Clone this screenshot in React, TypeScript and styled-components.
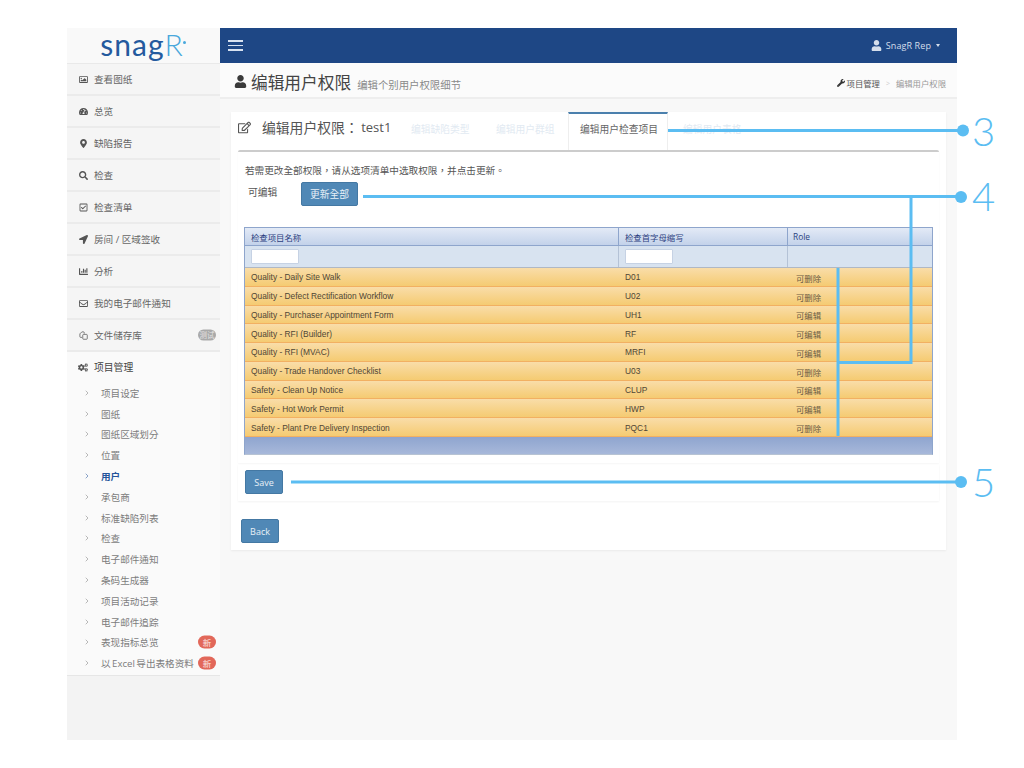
import React from 'react';
import styled, { createGlobalStyle } from 'styled-components';
import { ChevronRight } from 'lucide-react';
import {
  FaChartBar,
  FaCogs,
  FaLocationArrow,
  FaMapMarkerAlt,
  FaRegCheckSquare,
  FaRegEdit,
  FaRegEnvelope,
  FaRegImage,
  FaSearch,
  FaTachometerAlt,
  FaUser,
  FaWrench,
} from 'react-icons/fa';

const CJK = '"Open Sans", "Noto Sans CJK TC", sans-serif';

const GlobalStyle = createGlobalStyle`
  html, body {
    margin: 0;
    padding: 0;
    background: #fff;
    font-family: ${CJK};
  }
  * { box-sizing: border-box; }
`;

const Canvas = styled.div`
  position: relative;
  width: 1024px;
  height: 768px;
  padding: 28px 67px;
  overflow: hidden;
`;

const Frame = styled.div`
  display: flex;
  width: 890px;
  height: 712px;
`;

/* ---------- sidebar ---------- */

const Sidebar = styled.aside`
  display: flex;
  flex-direction: column;
  width: 153px;
  flex: none;
  background: #f3f3f3;
`;

const LogoBar = styled.div`
  display: flex;
  align-items: center;
  justify-content: center;
  height: 36px;
  padding: 0 3px 3px 0;
  background: #f9f9f9;
  border-bottom: 1px solid #e9e9e9;
`;

const LogoText = styled.span`
  display: flex;
  align-items: baseline;
  font-family: Lato, sans-serif;
  font-size: 30px;
  line-height: 32px;
  letter-spacing: 1px;
  color: #245a9e;
`;

const LogoR = styled.span`
  position: relative;
  font-weight: 300;
  color: #4aa8dc;
  &::after {
    content: '';
    position: absolute;
    right: -2px;
    top: 13px;
    width: 3px;
    height: 3px;
    border-radius: 50%;
    background: #4aa8dc;
  }
`;

const NavItem = styled.div`
  position: relative;
  display: flex;
  align-items: center;
  height: 32px;
  padding-left: 11px;
  font-size: 9.6px;
  color: #666;
  background: #f5f5f5;
  border-bottom: 2px solid #ebebeb;
`;

const NavIcon = styled.span`
  display: flex;
  justify-content: center;
  width: 10px;
  margin-right: 6px;
  font-size: 9px;
  color: #555;
`;

const GroupIcon = styled(NavIcon)`
  font-size: 11px;
`;

const Pill = styled.span<{ $tone: 'gray' | 'red' }>`
  position: absolute;
  right: 4px;
  top: 50%;
  transform: translateY(-50%);
  width: 18px;
  height: ${(p) => (p.$tone === 'red' ? 13 : 11)}px;
  border-radius: 7px;
  font-size: ${(p) => (p.$tone === 'red' ? 8.5 : 7.5)}px;
  line-height: ${(p) => (p.$tone === 'red' ? 13 : 11)}px;
  text-align: center;
  color: ${(p) => (p.$tone === 'red' ? '#fbe6e2' : '#e4e4e4')};
  background: ${(p) => (p.$tone === 'red' ? '#e2685a' : '#a9a9a9')};
`;

const NavGroup = styled.div`
  background: #fafafa;
  border-bottom: 1px solid #e6e6e6;
  padding-bottom: 1px;
`;

const GroupTitle = styled.div`
  display: flex;
  align-items: center;
  height: 30px;
  padding-left: 11px;
  font-size: 9.8px;
  color: #444;
`;

const SubList = styled.div`
  display: flex;
  flex-direction: column;
  padding-top: 0.5px;
`;

const SubItem = styled.div<{ $active?: boolean }>`
  position: relative;
  display: flex;
  align-items: center;
  height: 20.8px;
  padding-left: 16px;
  font-size: 9.6px;
  word-spacing: -1px;
  font-weight: ${(p) => (p.$active ? 700 : 400)};
  color: ${(p) => (p.$active ? '#24549a' : '#7d7d7d')};
  svg {
    width: 8px;
    height: 8px;
    margin-right: 10px;
    flex: none;
  }
`;

/* ---------- main ---------- */

const Main = styled.main`
  flex: 1;
  display: flex;
  flex-direction: column;
  background: #f8f8f8;
  min-width: 0;
`;

const TopBar = styled.header`
  display: flex;
  align-items: center;
  justify-content: space-between;
  height: 35px;
  padding: 0 17px 0 8px;
  background: #1e4785;
`;

const Burger = styled.div`
  display: flex;
  flex-direction: column;
  gap: 3px;
  width: 15px;
  span {
    display: block;
    height: 1.5px;
    background: #d8e2f0;
  }
`;

const UserMenu = styled.div`
  display: flex;
  align-items: center;
  font-size: 9px;
  letter-spacing: 0.1px;
  color: #d5deeb;
  svg {
    width: 11px;
    height: 11px;
    margin-right: 4px;
  }
`;

const Caret = styled.span`
  width: 0;
  height: 0;
  margin-left: 5px;
  border-left: 2.5px solid transparent;
  border-right: 2.5px solid transparent;
  border-top: 3px solid #d5deeb;
`;

const PageHead = styled.div`
  display: flex;
  align-items: center;
  justify-content: space-between;
  height: 36px;
  padding: 3px 11px 0 14px;
  background: #fbfbfb;
  border-bottom: 2px solid #eeeeee;
`;

const PageTitle = styled.div`
  display: flex;
  align-items: baseline;
  font-size: 16.7px;
  color: #444;
  svg {
    align-self: center;
    width: 13px;
    height: 13px;
    margin-right: 4px;
    color: #3a3a3a;
  }
  small {
    margin-left: 6px;
    font-size: 10.4px;
    color: #8a8a8a;
  }
`;

const Crumbs = styled.div`
  display: flex;
  align-items: center;
  margin-top: 3px;
  font-size: 8.35px;
  color: #999;
  svg {
    width: 8px;
    height: 8px;
    margin-right: 2px;
    color: #333;
  }
  b {
    font-weight: 400;
    color: #555;
  }
  i {
    margin: 0 6px;
    font-style: normal;
    font-size: 7px;
    color: #ccc;
  }
`;

const Portlet = styled.section`
  margin: 13px 11px 0;
  height: 438px;
  background: #fff;
  box-shadow: 0 1px 2px rgba(0, 0, 0, 0.06);
`;

const PortletHead = styled.div`
  display: flex;
  align-items: stretch;
  height: 38px;
`;

const PortletTitle = styled.div`
  display: flex;
  align-items: center;
  width: 169px;
  padding: 0 0 8px 7px;
  font-size: 13.8px;
  white-space: pre;
  color: #555;
  svg {
    width: 13px;
    height: 13px;
    margin-right: 11px;
    color: #555;
  }
`;

const TitleName = styled.span`
  font-size: 13px;
  margin-left: -1px;
`;

const Tab = styled.div<{ $w: number; $pad: number; $active?: boolean }>`
  display: flex;
  align-items: center;
  width: ${(p) => p.$w}px;
  padding: 0 0 7px ${(p) => p.$pad}px;
  font-size: 9.75px;
  color: ${(p) => (p.$active ? '#666' : '#e2eaf2')};
  background: #fff;
  border-top: 2px solid ${(p) => (p.$active ? '#4b80ad' : 'transparent')};
  border-left: 1px solid ${(p) => (p.$active ? '#eee' : 'transparent')};
  border-right: 1px solid ${(p) => (p.$active ? '#eee' : 'transparent')};
`;

const PortletBody = styled.div`
  margin: 0 7px;
`;

const TableCard = styled.div`
  height: 313px;
  padding: 12px 6px 0;
  border-top: 2px solid #ccc;
  border-radius: 2px 2px 0 0;
  box-shadow: 0 1px 2px rgba(0, 0, 0, 0.04);
`;

const Hint = styled.div`
  font-size: 9.65px;
  line-height: 14px;
  color: #555;
  padding-left: 1px;
`;

const BulkRow = styled.div`
  display: flex;
  align-items: flex-start;
  margin-top: 4px;
  height: 45px;
`;

const BulkLabel = styled.span`
  width: 57px;
  padding: 4px 0 0 4px;
  font-size: 9.8px;
  line-height: 14px;
  color: #555;
`;

const Button = styled.button`
  display: block;
  height: 24px;
  padding: 0;
  font-family: ${CJK};
  font-size: 9.75px;
  color: #e8f0f7;
  background: #5088b6;
  border: 1px solid #4478a3;
  border-radius: 2px;
`;

const BulkButton = styled(Button)`
  width: 57px;
`;

const SaveButton = styled(Button)`
  width: 38px;
  font-size: 9px;
`;

const BackButton = styled(Button)`
  width: 38px;
  margin: 18px 0 0 10px;
  font-size: 9px;
`;

const Grid = styled.div`
  width: 689px;
  border: 1px solid #8ea5cc;
  border-bottom: 1px solid #b7c3d3;
`;

const Row = styled.div<{ $h: number }>`
  display: grid;
  grid-template-columns: 374px 169px 1fr;
  height: ${(p) => p.$h}px;
`;

const HeadRow = styled(Row)`
  background: linear-gradient(#e3eaf6, #c3d2ea);
  border-bottom: 1px solid #8ea5cc;
`;

const FilterRow = styled(Row)`
  background: #d8e3f0;
  border-bottom: 1px solid #b0b8c4;
`;

const DataRow = styled(Row)`
  background: linear-gradient(#f9dda9, #f5cb72);
  border-bottom: 1px solid #f2b062;
`;

const HeadCell = styled.div`
  display: flex;
  align-items: center;
  padding-left: 6px;
  font-size: 8.4px;
  color: #2c3f80;
  border-right: 1px solid #8ea5cc;
  &:last-child {
    border-right: 0;
    padding-left: 5px;
  }
`;

const FilterCell = styled.div`
  display: flex;
  align-items: center;
  padding-left: 6px;
  border-right: 1px solid #b4c2d6;
  &:last-child {
    border-right: 0;
  }
`;

const FilterBox = styled.div`
  width: 48px;
  height: 15px;
  background: #fff;
  border: 1px solid #c6d2e4;
  border-radius: 1px;
`;

const Cell = styled.div`
  display: flex;
  align-items: center;
  padding: 1px 0 0 6px;
  font-family: 'Liberation Sans', sans-serif;
  font-size: 8.4px;
  color: #4f4636;
`;

const RoleCell = styled.div`
  display: flex;
  align-items: center;
  padding: 2px 0 0 8px;
  font-size: 8.4px;
  color: #6b5c45;
`;

const GridFoot = styled.div`
  height: 17px;
  background: linear-gradient(#8fa5cf, #a7b8da);
`;

const SaveBar = styled.div`
  height: 37px;
  margin-top: 1px;
  padding: 6px 7px 0;
  box-shadow: 0 1px 2px rgba(0, 0, 0, 0.05);
`;

/* ---------- callouts over the screenshot ---------- */

const Callouts = styled.svg`
  position: absolute;
  left: 0;
  top: 0;
  width: 1024px;
  height: 768px;
  pointer-events: none;
`;

const CalloutNumber = styled.span<{ $top: number }>`
  position: absolute;
  left: 972px;
  top: ${(p) => p.$top}px;
  font-family: Lato, sans-serif;
  font-weight: 300;
  font-size: 40px;
  line-height: 40px;
  color: #5bbdf2;
`;

const DocsIcon = () => (
  <svg viewBox="0 0 12 12" width="1em" height="1em" fill="none" stroke="currentColor" strokeWidth="1">
    <path d="M4 8.5H2.2a1 1 0 0 1-1-1V3.8L3.8 1.2H6a1 1 0 0 1 1 1V3.5" />
    <rect x="5" y="4.5" width="6" height="6.5" rx="1" />
  </svg>
);

const navItems = [
  { icon: <FaRegImage />, label: '查看图纸' },
  { icon: <FaTachometerAlt />, label: '总览' },
  { icon: <FaMapMarkerAlt />, label: '缺陷报告' },
  { icon: <FaSearch />, label: '检查' },
  { icon: <FaRegCheckSquare />, label: '检查清单' },
  { icon: <FaLocationArrow />, label: '房间 / 区域签收' },
  { icon: <FaChartBar />, label: '分析' },
  { icon: <FaRegEnvelope />, label: '我的电子邮件通知' },
  { icon: <DocsIcon />, label: '文件储存库', beta: true },
];

const subItems = [
  { label: '项目设定' },
  { label: '图纸' },
  { label: '图纸区域划分' },
  { label: '位置' },
  { label: '用户', active: true },
  { label: '承包商' },
  { label: '标准缺陷列表' },
  { label: '检查' },
  { label: '电子邮件通知' },
  { label: '条码生成器' },
  { label: '项目活动记录' },
  { label: '电子邮件追踪' },
  { label: '表现指标总览', isNew: true },
  { label: '以 Excel 导出表格资料', isNew: true },
];

const rows = [
  ['Quality - Daily Site Walk', 'D01', '可删除'],
  ['Quality - Defect Rectification Workflow', 'U02', '可删除'],
  ['Quality - Purchaser Appointment Form', 'UH1', '可编辑'],
  ['Quality - RFI (Builder)', 'RF', '可编辑'],
  ['Quality - RFI (MVAC)', 'MRFI', '可编辑'],
  ['Quality - Trade Handover Checklist', 'U03', '可删除'],
  ['Safety - Clean Up Notice', 'CLUP', '可编辑'],
  ['Safety - Hot Work Permit', 'HWP', '可编辑'],
  ['Safety - Plant Pre Delivery Inspection', 'PQC1', '可删除'],
];

export default function App() {
  return (
    <Canvas>
      <GlobalStyle />
      <Frame>
        <Sidebar>
          <LogoBar>
            <LogoText>
              snag<LogoR>R</LogoR>
            </LogoText>
          </LogoBar>
          {navItems.map((item) => (
            <NavItem key={item.label}>
              <NavIcon>{item.icon}</NavIcon>
              {item.label}
              {item.beta && <Pill $tone="gray">测试</Pill>}
            </NavItem>
          ))}
          <NavGroup>
            <GroupTitle>
              <GroupIcon>
                <FaCogs />
              </GroupIcon>
              项目管理
            </GroupTitle>
            <SubList>
              {subItems.map((item) => (
                <SubItem key={item.label} $active={item.active}>
                  <ChevronRight strokeWidth={1.6} />
                  {item.label}
                  {item.isNew && <Pill $tone="red">新</Pill>}
                </SubItem>
              ))}
            </SubList>
          </NavGroup>
        </Sidebar>

        <Main>
          <TopBar>
            <Burger>
              <span />
              <span />
              <span />
            </Burger>
            <UserMenu>
              <FaUser />
              SnagR Rep
              <Caret />
            </UserMenu>
          </TopBar>

          <PageHead>
            <PageTitle>
              <FaUser />
              编辑用户权限
              <small>编辑个别用户权限细节</small>
            </PageTitle>
            <Crumbs>
              <FaWrench />
              <b>项目管理</b>
              <i>&gt;</i>
              编辑用户权限
            </Crumbs>
          </PageHead>

          <Portlet>
            <PortletHead>
              <PortletTitle>
                <FaRegEdit />
                编辑用户权限： <TitleName>test1</TitleName>
              </PortletTitle>
              <Tab $w={84} $pad={10}>编辑缺陷类型</Tab>
              <Tab $w={84} $pad={11}>编辑用户群组</Tab>
              <Tab $w={100} $pad={11} $active>编辑用户检查项目</Tab>
              <Tab $w={84} $pad={14}>编辑用户表格</Tab>
            </PortletHead>

            <PortletBody>
              <TableCard>
                <Hint>若需更改全部权限，请从选项清单中选取权限，并点击更新。</Hint>
                <BulkRow>
                  <BulkLabel>可编辑</BulkLabel>
                  <BulkButton>更新全部</BulkButton>
                </BulkRow>
                <Grid>
                  <HeadRow $h={18}>
                    <HeadCell>检查项目名称</HeadCell>
                    <HeadCell>检查首字母缩写</HeadCell>
                    <HeadCell>Role</HeadCell>
                  </HeadRow>
                  <FilterRow $h={22}>
                    <FilterCell>
                      <FilterBox />
                    </FilterCell>
                    <FilterCell>
                      <FilterBox />
                    </FilterCell>
                    <FilterCell />
                  </FilterRow>
                  {rows.map(([name, code, role]) => (
                    <DataRow key={code} $h={18.78}>
                      <Cell>{name}</Cell>
                      <Cell>{code}</Cell>
                      <RoleCell>{role}</RoleCell>
                    </DataRow>
                  ))}
                  <GridFoot />
                </Grid>
              </TableCard>
              <SaveBar>
                <SaveButton>Save</SaveButton>
              </SaveBar>
            </PortletBody>
            <BackButton>Back</BackButton>
          </Portlet>
        </Main>
      </Frame>

      <Callouts viewBox="0 0 1024 768">
        <g stroke="#5bbdf2" strokeWidth="3" fill="none">
          <path d="M668 130.5H962" />
          <path d="M363 196.5H962" />
          <path d="M911 196.5V364" />
          <path d="M838 268V436" />
          <path d="M838 362.5H912" />
          <path d="M291 482H962" />
        </g>
        <g fill="#5bbdf2">
          <circle cx="963" cy="130.5" r="6" />
          <circle cx="961" cy="197" r="6" />
          <circle cx="961" cy="482" r="6" />
        </g>
      </Callouts>
      <CalloutNumber $top={111}>3</CalloutNumber>
      <CalloutNumber $top={176}>4</CalloutNumber>
      <CalloutNumber $top={462}>5</CalloutNumber>
    </Canvas>
  );
}
